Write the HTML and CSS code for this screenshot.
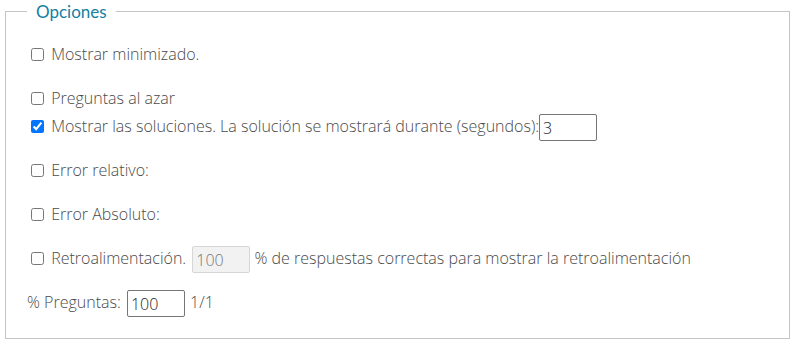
FILE: index.html
```html
<!DOCTYPE html>
<html lang="es">
<head>
<meta charset="utf-8">
<title>Opciones</title>
<link rel="stylesheet" href="styles.css">
</head>
<body>
<fieldset class="options">
  <legend class="options-title">Opciones</legend>
  <div class="row"><label><input type="checkbox"> Mostrar minimizado.</label></div>
  <div class="group">
    <div class="row"><label><input type="checkbox"> Preguntas al azar</label></div>
    <div class="row"><label><input type="checkbox" checked> Mostrar las soluciones. La solución se mostrará durante (segundos):</label><input class="field" type="text" value="3"></div>
  </div>
  <div class="row"><label><input type="checkbox"> Error relativo:</label></div>
  <div class="row"><label><input type="checkbox"> Error Absoluto:</label></div>
  <div class="row"><label><input type="checkbox"> Retroalimentación.</label> <input class="field field-gap" type="text" value="100" disabled> % de respuestas correctas para mostrar la retroalimentación</div>
  <div class="row">% Preguntas: <input class="field field-pct" type="text" value="100"> 1/1</div>
</fieldset>
</body>
</html>
```
FILE: styles.css
```css
html, body {
  margin: 0;
  padding: 0;
  background: #ffffff;
}
body {
  font-family: "Open Sans", "Noto Sans", sans-serif;
  font-size: 16px;
  font-weight: 300;
  color: #4a4a4a;
}
.options {
  margin: 0 3px 6px 5px;
  padding: 17px 21px 22px 21px;
  border: 1px solid #c4c4c4;
  min-width: 0;
}
.options-title {
  padding: 0 9px;
  font-family: "Lato", "Open Sans", sans-serif;
  font-size: 17px;
  font-weight: 400;
  line-height: 23px;
  color: #137fa2;
}
.row {
  height: 28px;
  line-height: 28px;
  white-space: nowrap;
}
.row + .row,
.group + .row,
.row + .group {
  margin-top: 16px;
}
.group .row + .row {
  margin-top: 0;
}
input[type="checkbox"] {
  margin: 0 3px 0 4px;
  width: 13px;
  height: 13px;
  vertical-align: middle;
  position: relative;
  top: -1px;
}
.field {
  box-sizing: border-box;
  width: 58px;
  height: 27px;
  margin: 0;
  padding: 0 3px;
  border: 1px solid #767676;
  border-radius: 2px;
  font-family: inherit;
  font-size: 16px;
  font-weight: 300;
  color: #222222;
  background: #ffffff;
  vertical-align: middle;
}
.field-gap {
  margin-left: 2px;
}
.field-pct {
  margin: 0 1px 0 2px;
}
.field:disabled {
  background: #f2f2f2;
  border-color: #d6d6d6;
  color: #777777;
}
```
